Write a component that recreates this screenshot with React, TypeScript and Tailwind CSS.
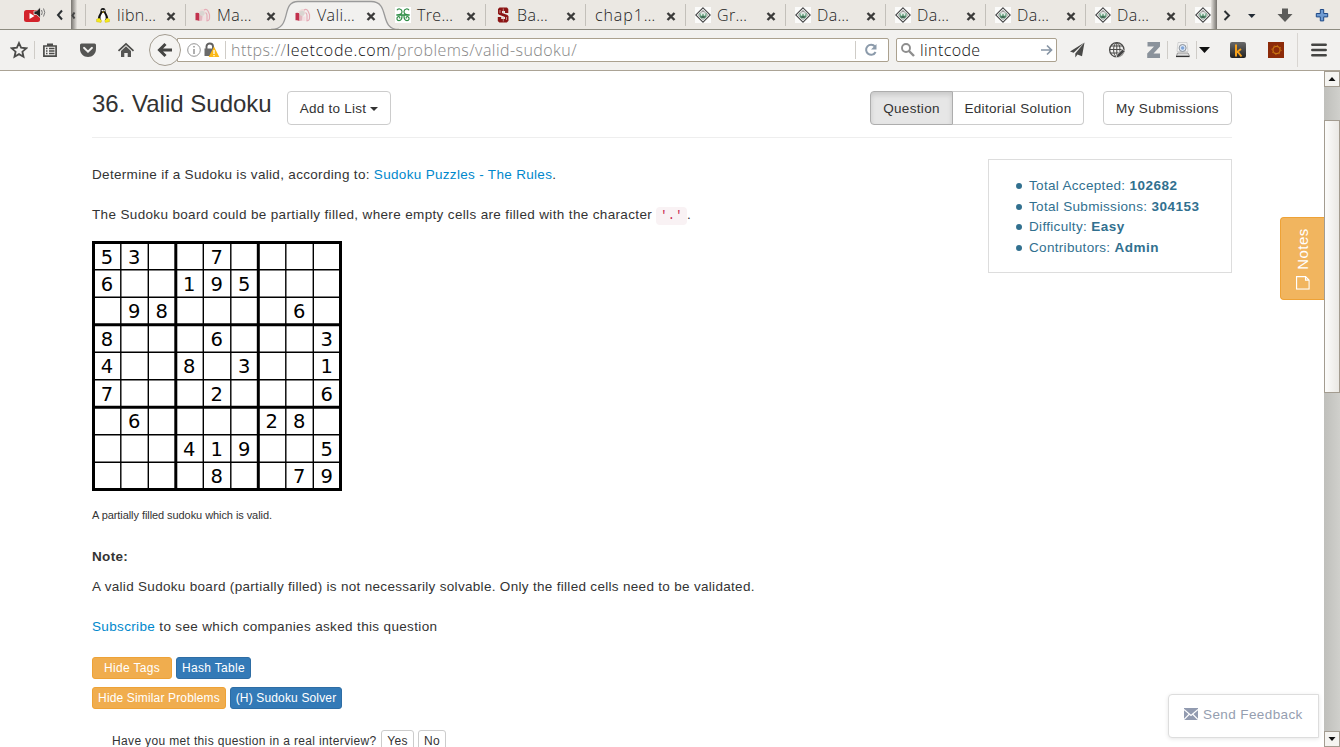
import React from "react";

type P = { children?: React.ReactNode; className?: string };

const TabClose = () => (
  <svg width="10" height="9" viewBox="0 0 10 9" className="shrink-0">
    <path d="M1.500 1L8.500 8M8.500 1L1.500 8" stroke="#3b3b3a" strokeWidth="2.400" fill="none" />
  </svg>
);

const Tux = () => (
  <svg width="16" height="16" viewBox="0 0 16 16">
    <path d="M8 1C6.200 1 5.400 2 5.500 4.300c.1 1.700-2 3.500-2.500 6.200L3.200 13h9.600l.3-2.500C12.700 8 10.600 6 10.500 4.300 10.500 2 9.800 1 8 1z" fill="#111" />
    <path d="M7.300 6C6.300 7.500 5.300 9 5.500 11.500c.2 2.500 5 2.500 5.200 0C10.900 9 10 7.500 9 6z" fill="#fff" />
    <path d="M1.500 12.300l2.700-1.300 2.500 2.700-.7 1.800-4.500-.7zM14.500 12.300L12 11l-2.300 2.700.7 1.800 4.100-.8z" fill="#f5ea1a" stroke="#b09800" strokeWidth=".3" />
    <circle cx="7.300" cy="3.600" r=".8" fill="#fff" />
    <circle cx="9.100" cy="3.600" r=".8" fill="#fff" />
    <path d="M7 4.700h2.400L8.200 5.900z" fill="#f5c20a" />
  </svg>
);

const Red = () => (
  <svg width="16" height="16" viewBox="0 0 16 16">
    <path d="M.5 6q2-.8 4 .2V14Q2.500 12.800.5 13.300z" fill="#c2314d" />
    <path d="M3 4.500l4-2.500 3 .5v3.500l-2 3.500-3.500-3z" fill="#efdcda" />
    <path d="M4.500 7l3 2v4.500L4.500 14z" fill="#e3b6be" />
    <circle cx="7" cy="6.300" r="2.500" fill="#d9d5d1" />
    <path d="M8 9.500h2.500v4.500H7" fill="#f3dfe1" />
    <path d="M9 3q2.500-1.500 4 1l1.500 3.500v4q-.5 2.500-3 2.500M10.500 5.500q1.500 1 1.500 3v5.500" stroke="#e5acb7" strokeWidth="1.200" fill="none" />
  </svg>
);

const Geeks = () => (
  <svg width="16" height="16" viewBox="0 0 16 16">
    <rect width="16" height="16" fill="#fff" />
    <path d="M2 3.200c1-2 4.800-1.700 5 1.300.1 2.200-1.400 3.400-5 3.500h12c-3.600-.1-5.100-1.300-5-3.500.2-3 4-3.300 5-1.300" fill="none" stroke="#2f8d46" strokeWidth="1.200" />
    <path d="M1 8h14M7 8c.2 3.800-1 5.700-3 5.700-2.300 0-2.800-2.900-1-4 1.200-.5 2.200.5 1.600 1.700M9 8c-.2 3.800 1 5.700 3 5.700 2.300 0 2.800-2.900 1-4-1.200-.5-2.200.5-1.600 1.700" fill="none" stroke="#2f8d46" strokeWidth="1.200" />
  </svg>
);

const Stanford = () => (
  <svg width="16" height="16" viewBox="0 0 16 16">
    <path d="M4.500 .5h7.500l1.300 1.500v4h-3.300V4H7v2l5.500 2 1 1.200v4.600L11.800 15.500H4.300L2.800 14v-4h3.400v2H10v-2L4 7.800l-1-1V2z" fill="#8c1515" />
    <path d="M8.300 1.500v4.500M8.300 9.500v5M5 3v3M11.500 10v3" stroke="#d9b9b5" strokeWidth=".7" />
  </svg>
);

const Diamond = () => (
  <svg width="16" height="16" viewBox="0 0 16 16">
    <rect width="16" height="16" fill="#fbfbfa" />
    <path d="M8 .8L15.200 8 8 15.200.8 8z" fill="#fff" stroke="#484848" strokeWidth="1.100" />
    <path d="M8 3L13 8l-5 5-5-5z" fill="none" stroke="#a2a2a2" strokeWidth=".7" />
    <path d="M4.500 6l1.500.7h4l1.500-.7c.6 3.500-.8 5.500-3.500 5.500S3.900 9.500 4.500 6z" fill="#529070" />
    <circle cx="6.500" cy="7.700" r="1" fill="#e5f2e9" />
    <circle cx="9.500" cy="7.700" r="1" fill="#e5f2e9" />
    <path d="M6.800 5.500L8 4.300l1.200 1.200M6.500 10h3" stroke="#333" strokeWidth=".8" fill="none" />
  </svg>
);

const Tab = ({ icon, label, first }: { icon?: React.ReactNode; label: string; first?: boolean }) => (
  <div className="flex h-[30px] w-[100px] shrink-0 items-center">
    <div className={first ? "h-[22px] w-px" : "h-[22px] w-px bg-[#c3c0ba]"} />
    {icon && <div className="ml-[9px] h-4 w-4">{icon}</div>}
    <div className={icon ? "ml-[6px] w-[46px] text-[16px] leading-[30px] tracking-[0.350px] whitespace-nowrap" : "ml-[9px] w-[68px] text-[16px] leading-[30px] tracking-[0.900px] whitespace-nowrap"}>{label}</div>
    <div className="mt-[2px] ml-[3px]"><TabClose /></div>
  </div>
);

const TabStrip = () => (
  <div className="relative flex h-[30px] w-full overflow-hidden border-b border-[#8d8b80] bg-[#ebe8e3] font-['Open_Sans','Noto_Sans',sans-serif] font-light text-[#1c1c1c]">
    <div className="flex w-[71px] shrink-0 items-center">
      <svg width="22" height="16" viewBox="0 0 22 16" className="ml-[24px]">
        <rect x="0" y="3" width="16" height="12" rx="2.500" fill="#d3232b" />
        <path d="M5.500 6v6l5-3z" fill="#fff" />
        <path d="M10 4h2.500l4-4v11l-4-3.500H10z" fill="#222" stroke="#f3f0ec" strokeWidth=".8" />
        <path d="M17.500 3q1.500 2.500 0 5M19.500 1.500q2.500 4 0 8" stroke="#777" fill="none" />
      </svg>
      <svg width="8" height="12" viewBox="0 0 8 12" className="ml-[10px]">
        <path d="M6 1.500L2 6l4 4.500" stroke="#2b3033" strokeWidth="2" fill="none" />
      </svg>
    </div>
    <div className="flex w-[14px] shrink-0 items-center bg-linear-to-r from-[#77746f] to-[#ebe8e3] to-45%">
      <svg width="6" height="9" viewBox="0 0 6 9" className="mt-[2px]"><path d="M3.500 1.500L1.500 4.500l2 3" stroke="#444" strokeWidth="2" fill="none" /></svg>
    </div>
    <Tab icon={<Tux />} label="libn…" />
    <Tab icon={<Red />} label="Ma…" />
    <div className="relative w-[100px] shrink-0">
      <svg width="128" height="30" viewBox="0 0 128 30" className="absolute top-0 -left-[14px]">
        <path d="M0 30V29.500C22 29.500 9 1.500 27 1.500H100C120 1.500 107 29.500 128 29.500V30z" fill="#f2f1ef" />
        <path d="M0 29.500C22 29.500 9 1.500 27 1.500H100C120 1.500 107 29.500 128 29.500" fill="none" stroke="#9a9a9a" strokeWidth="1.300" />
      </svg>
      <div className="relative"><Tab icon={<Red />} label="Vali…" first /></div>
    </div>
    <Tab icon={<Geeks />} label="Tre…" first />
    <Tab icon={<Stanford />} label="Ba…" />
    <Tab label="chap1…" />
    <Tab icon={<Diamond />} label="Gr…" />
    <Tab icon={<Diamond />} label="Da…" />
    <Tab icon={<Diamond />} label="Da…" />
    <Tab icon={<Diamond />} label="Da…" />
    <Tab icon={<Diamond />} label="Da…" />
    <div className="flex w-[32px] shrink-0 items-center bg-linear-to-r from-[#ebe8e3] from-80% to-[#77746f]">
      <div className="h-[22px] w-px bg-[#c3c0ba]" />
      <div className="ml-[9px] h-4 w-4"><Diamond /></div>
    </div>
    <div className="flex flex-1 items-center">
      <svg width="123" height="30" viewBox="1217 0 123 30">
        <path d="M1224.500 11L1229 15.500l-4.500 4.500" stroke="#2b3033" strokeWidth="2" fill="none" />
        <path d="M1248 14h7.500l-3.750 4z" fill="#222b35" />
        <path d="M1282 8.500h6v5.500h4.500L1285 22l-7.500-8h4.500z" fill="#5c5c5a" />
        <path d="M1320.300 9.500h3.400v4h4v3.400h-4v4h-3.400v-4h-4v-3.400h4z" fill="#6f9bd2" stroke="#204a87" strokeWidth="1" />
      </svg>
    </div>
  </div>
);

const Icon = ({ children, className }: P) => (
  <svg width="18" height="18" viewBox="0 0 18 18" className={`shrink-0 ${className ?? ""}`} fill="none">{children}</svg>
);

const Sep = ({ className }: P) => <div className={`h-[18px] w-px shrink-0 bg-[#cfccc7] ${className ?? ""}`} />;

const NavBar = () => (
  <div className="flex h-[41px] w-full items-center border-b border-[#aba395] bg-[#f2f1ef] font-['Open_Sans','Noto_Sans',sans-serif]">
    <Icon className="ml-[10px]"><path d="M9 2l2.100 4.700 5.100.6-3.800 3.400 1.100 5L9 13.100l-4.500 2.600 1.100-5L1.800 7.300l5.100-.6z" stroke="#4c4c4a" strokeWidth="1.800" /></Icon>
    <Sep className="ml-[6px]" />
    <Icon className="ml-[6px]">
      <path d="M2.900 5h12.200v10.100H2.900z" stroke="#4c4c4a" strokeWidth="1.700" />
      <path d="M6 5V2.500h6V5" fill="#4c4c4a" />
      <path d="M5 7.500h1.500M8 7.500h5.500M5 10h1.500M8 10h5.500M5 12.500h1.500M8 12.500h5.500" stroke="#4c4c4a" strokeWidth="1.400" />
    </Icon>
    <Icon className="ml-[20px]">
      <path d="M2.500 2.500h13q1.500 0 1.500 1.500v4c0 4.500-3.500 8-8 8s-8-3.500-8-8V4q0-1.500 1.500-1.500z" fill="#565654" />
      <path d="M5 6.800l4 3.800 4-3.800" stroke="#f2f1ef" strokeWidth="1.900" strokeLinecap="round" />
    </Icon>
    <Icon className="ml-[20px]">
      <path d="M1.500 9.800L9 2.800l7.500 7" stroke="#4c4c4a" strokeWidth="1.700" />
      <path d="M4 10l5-4.700 5 4.700v6h-3.300v-4H7.300v4H4z" fill="#555553" />
    </Icon>
    <div className="z-10 ml-[14px] flex h-8 w-8 shrink-0 items-center justify-center rounded-full border border-[#a39c90] bg-[#f4f3f1]">
      <Icon><path d="M9.500 3L3.500 9l6 6M4 9h12" stroke="#454543" strokeWidth="3" /></Icon>
    </div>
    <div className="-ml-[4px] flex h-6 w-[712px] shrink-0 items-center rounded-r-[2px] border border-[#aba18f] bg-white">
      <Icon className="ml-[7px]">
        <circle cx="9" cy="9" r="6.300" stroke="#959595" strokeWidth="1" />
        <path d="M9 8v5M9 5v1.500" stroke="#959595" strokeWidth="1.500" />
      </Icon>
      <Icon>
        <path d="M3.500 8V5.500c0-4 6.500-4 6.500 0V8" stroke="#606060" strokeWidth="1.900" />
        <path d="M1.500 7.500h10.500V15H1.500z" fill="#6b6b6b" />
        <path d="M11 5.500l5.300 10.500H5.700z" fill="#fbb917" />
        <path d="M11 9v4M11 14v1.200" stroke="#fff" strokeWidth="1.300" />
      </Icon>
      <Sep className="ml-[4px]" />
      <span className="ml-[5px] w-[624px] text-[16px] leading-[22px] font-light tracking-[0.450px] text-[#858585]">https://<span className="tracking-[0.650px] text-[#111]">leetcode.com</span>/problems/valid-sudoku/</span>
      <Sep />
      <Icon className="ml-[6px]">
        <path d="M13 5.600A5 5 0 1 0 13.600 11" stroke="#8c9bab" strokeWidth="2" />
        <path d="M14.500 3v5.500H9z" fill="#8c9bab" />
      </Icon>
    </div>
    <div className="ml-[7px] flex h-6 w-[161px] shrink-0 items-center rounded-[2px] border border-[#aba18f] bg-white">
      <Icon className="ml-[2px]"><circle cx="7" cy="7" r="4" stroke="#8e8e8e" strokeWidth="1.900" /><path d="M10 10l5 5" stroke="#8e8e8e" strokeWidth="2.400" /></Icon>
      <span className="ml-[3px] w-[121px] text-[16px] leading-[22px] font-light tracking-[0.400px] text-[#111]">lintcode</span>
      <Icon><path d="M3 9h10M9 4.500L13.500 9 9 13.500" stroke="#8795a5" strokeWidth="1.700" /></Icon>
    </div>
    <Icon className="ml-[12px]"><path d="M15.500 1.500L1 10.500l3.600 1.200zM15.500 1.500L6.300 12.400v4.100l2.200-3 4.500 1.700z" fill="#4a4a48" /></Icon>
    <Icon className="ml-[21px]">
      <circle cx="8.800" cy="8.800" r="7.200" stroke="#4a4a48" strokeWidth="1.300" />
      <ellipse cx="8.800" cy="8.800" rx="3.200" ry="7" stroke="#4a4a48" />
      <path d="M1.800 8.500h14M3 5h11.500M3 12h11M8.800 2v13" stroke="#4a4a48" />
      <path d="M8 17l1-3.500 5.500-5.500 2.500 2.500-5.500 5.500z" fill="#444" stroke="#f2f1ef" strokeWidth=".8" />
    </Icon>
    <Icon className="ml-[19px]"><path d="M2.500 1h12.500v4.500L8.500 12.500H15V17H2.200v-4.500l6.800-7H2.500z" fill="#8a929b" /></Icon>
    <Sep className="ml-[4px]" />
    <Icon className="ml-[6px]">
      <path d="M4 1.500h9l1 9H3z" fill="#f2f2f2" stroke="#c5c5c5" strokeWidth=".7" />
      <circle cx="8.600" cy="7" r="3.500" fill="#dce6f3" stroke="#80878f" strokeWidth=".9" />
      <circle cx="8.600" cy="7" r="1.700" fill="#7fa5da" />
      <path d="M3.500 12h10.500l1.500 3h-13z" fill="#dcdcdc" stroke="#888" strokeWidth=".8" />
      <path d="M2 15.500h13.500" stroke="#333" strokeWidth="1.200" />
    </Icon>
    <Sep className="ml-[4px]" />
    <svg width="12" height="8" viewBox="0 0 12 8" className="ml-[2px] shrink-0"><path d="M0 1h11L5.500 7z" fill="#111" /></svg>
    <svg width="16" height="16" viewBox="0 0 16 16" className="ml-[19px] shrink-0">
      <defs><linearGradient id="kbg" x1="0" y1="0" x2="0" y2="1"><stop offset="0" stopColor="#6a6a6a" /><stop offset="1" stopColor="#222" /></linearGradient></defs>
      <rect width="16" height="16" rx="2" fill="url(#kbg)" />
      <path d="M6 2.500v12M11 7l-4.500 3.500M8 10l3.500 4.500" stroke="#f5a11c" strokeWidth="2" fill="none" />
    </svg>
    <svg width="16" height="16" viewBox="0 0 16 16" className="ml-[22px] shrink-0">
      <rect width="16" height="16" fill="#8c2a08" />
      <circle cx="8.500" cy="8" r="3.600" fill="none" stroke="#c9740f" strokeWidth="1.200" />
      <circle cx="8.500" cy="8" r="4.700" fill="none" stroke="#c9740f" strokeWidth="1" strokeDasharray="1 2.690" />
    </svg>
    <div className="ml-[13px] h-[34px] w-px bg-[#d9d6d2]" />
    <svg width="16" height="14" viewBox="0 0 16 14" className="ml-[13px] shrink-0"><path d="M1.300 1.800h13.400M1.300 7h13.400M1.300 12.200h13.400" stroke="#454543" strokeWidth="2.500" strokeLinecap="round" /></svg>
  </div>
);

const ROWS = ["53..7....", "6..195...", ".98....6.", "8...6...3", "4..8.3..1", "7...2...6", ".6....28.", "...419..5", "....8..79"];

const Sudoku = () => (
  <svg width="250" height="250" viewBox="0 0 250 250" className="block">
    <rect x="1.500" y="1.500" width="247" height="247" fill="#fff" stroke="#000" strokeWidth="3" />
    {[1, 2, 3, 4, 5, 6, 7, 8].map((i) => {
      const p = 1.300 + i * 27.500;
      const w = i % 3 === 0 ? 3 : 1.400;
      return (
        <g key={i} stroke="#000" strokeWidth={w}>
          <path d={`M${p} 0V250`} />
          <path d={`M0 ${p}H250`} />
        </g>
      );
    })}
    <g fontFamily="DejaVu Sans" fontSize="19.500" textAnchor="middle" fill="#000">
      {ROWS.map((r, y) =>
        r.split("").map((c, x) => (c === "." ? null : (
          <text key={`${x}-${y}`} x={15 + x * 27.470} y={22.500 + y * 27.470}>{c}</text>
        )))
      )}
    </g>
  </svg>
);

const Stat = ({ label, value }: { label: string; value: string }) => (
  <li className="flex h-[20.600px] items-center">
    <span className="mr-[7px] h-[6px] w-[6px] rounded-full bg-[#31708f]" />
    <span className="whitespace-pre">{label} </span><b className="tracking-[0.500px]">{value}</b>
  </li>
);

const Problem = () => (
  <main className="w-[1140px] text-[13.500px] tracking-[0.320px] text-[#333]">
    <div className="flex h-[67px] items-start border-b border-[#eee] pt-[20px]">
      <h1 className="w-[195px] text-[24px] leading-[26px] tracking-normal whitespace-nowrap">36. Valid Sudoku</h1>
      <button className="flex h-[34px] w-[104px] items-center justify-center rounded-[4px] border border-[#ccc] pt-[2px] tracking-[0.250px]">Add to List<svg width="8" height="4" viewBox="0 0 8 4" className="ml-[4px]"><path d="M0 0h8L4 4z" fill="#333" /></svg></button>
      <div className="ml-auto flex">
        <button className="h-[34px] w-[83px] rounded-l-[4px] border border-[#adadad] bg-[#e6e6e6] pt-[2px] shadow-[inset_0_3px_5px_rgba(0,0,0,0.125)]">Question</button>
        <button className="h-[34px] w-[131px] rounded-r-[4px] border border-l-0 border-[#ccc] pt-[2px]">Editorial Solution</button>
        <button className="ml-[19px] h-[34px] w-[129px] rounded-[4px] border border-[#ccc] pt-[2px]">My Submissions</button>
      </div>
    </div>
    <div className="flex justify-between">
      <div className="pt-[27px] leading-5 whitespace-nowrap">
        <p>Determine if a Sudoku is valid, according to: <a className="text-[#0088cc]">Sudoku Puzzles - The Rules</a>.</p>
        <p className="mt-5 h-5 tracking-[0.350px]">The Sudoku board could be partially filled, where empty cells are filled with the character <code className="rounded-[4px] bg-[#f9f2f4] px-1 py-[2px] font-['Liberation_Mono',monospace] text-[12px] text-[#c7254e]">'.'</code>.</p>
        <div className="mt-4"><Sudoku /></div>
        <p className="mt-[14px] text-[11px] tracking-[-0.070px]">A partially filled sudoku which is valid.</p>
        <p className="mt-[22px] font-bold">Note:</p>
        <p className="mt-[10px] tracking-[0.310px]">A valid Sudoku board (partially filled) is not necessarily solvable. Only the filled cells need to be validated.</p>
        <p className="mt-5 tracking-[0.350px]"><a className="text-[#0088cc]">Subscribe</a> to see which companies asked this question</p>
        <div className="mt-5 flex gap-1 text-[12px] leading-5 text-white">
          <span className="w-[80px] rounded-[3px] border border-[#eea236] bg-[#f0ad4e] text-center">Hide Tags</span>
          <span className="w-[75px] rounded-[3px] border border-[#2e6da4] bg-[#337ab7] text-center">Hash Table</span>
        </div>
        <div className="mt-2 flex gap-1 text-[12px] leading-5 tracking-[0.150px] text-white">
          <span className="w-[134px] rounded-[3px] border border-[#eea236] bg-[#f0ad4e] text-center">Hide Similar Problems</span>
          <span className="w-[112px] rounded-[3px] border border-[#2e6da4] bg-[#337ab7] text-center">(H) Sudoku Solver</span>
        </div>
        <div className="mt-[21px] flex pl-[20px] text-[12px] leading-5">
          <span className="w-[269px] pt-px tracking-[0.350px]">Have you met this question in a real interview?</span>
          <span className="w-[33px] rounded-[3px] border border-[#ccc] text-center">Yes</span>
          <span className="ml-1 w-[28px] rounded-[3px] border border-[#ccc] text-center">No</span>
        </div>
      </div>
      <ul className="mt-[21px] h-[114px] w-[244px] border border-[#ddd] pt-[16px] pl-[27px] text-[#31708f]">
        <Stat label="Total Accepted:" value="102682" />
        <Stat label="Total Submissions:" value="304153" />
        <Stat label="Difficulty:" value="Easy" />
        <Stat label="Contributors:" value="Admin" />
      </ul>
    </div>
  </main>
);

const ScrollButton = ({ up }: { up?: boolean }) => (
  <div className="flex h-4 w-4 shrink-0 items-center justify-center border border-[#a39c90] bg-[#f5f4f1]">
    <svg width="8" height="4" viewBox="0 0 8 4"><path d={up ? "M.5 4L4 0l3.500 4z" : "M.5 0h7L4 4z"} fill="#111" /></svg>
  </div>
);

const ScrollBar = () => (
  <div className="flex h-full w-4 shrink-0 flex-col bg-linear-to-r from-[#bfbfbb] to-[#d0d0cc]">
    <ScrollButton up />
    <div className="mt-[33px] h-[273px] w-4 border border-[#a39c90] bg-linear-to-r from-[#fcfcfb] to-[#eae8e4]" />
    <div className="mt-auto"><ScrollButton /></div>
  </div>
);

export default function App() {
  return (
    <div className="flex h-[747px] w-[1340px] flex-col overflow-hidden bg-white font-['Liberation_Sans',Arial,sans-serif]">
      <TabStrip />
      <NavBar />
      <div className="relative flex h-[676px] justify-between overflow-hidden pl-[92px]">
        <Problem />
        <ScrollBar />
        <div className="absolute top-[146px] right-4 flex h-[83px] w-[44px] items-center justify-center rounded-l-[4px] border border-r-0 border-[#eea236] bg-[#f0ad4e]/90 text-white">
          <div className="flex -rotate-90 items-center gap-[6px] text-[15px] leading-5 tracking-[0.500px]">
            <svg width="14" height="14" viewBox="0 0 14 14" fill="none" stroke="#fff" strokeWidth="1.200" className="shrink-0"><path d="M.7.7h9.600L13.300 0V13.300H.7zM9.700 13.300V9.700h3.600" stroke="none" /><path d="M.7.7h12.600v9L9.700 13.300H.7zM9.700 13.300V9.700h3.600" /></svg>
            Notes
          </div>
        </div>
        <div className="absolute top-[623px] left-[1168px] flex h-[44px] w-[151px] items-center rounded-l-[4px] border border-[#ddd] bg-white pb-[3px] pl-[15px] text-[13.500px] tracking-[0.400px] text-[#959eb0] shadow-[0_1px_4px_rgba(0,0,0,0.1)]">
          <svg width="14" height="12" viewBox="0 0 14 12" className="-mt-px"><path d="M0 0h14v12H0z" fill="#929bb0" /><path d="M0 1.500l7 6 7-6M0 11.500l5-5M14 11.500l-5-5" stroke="#fff" strokeWidth="1.200" fill="none" /></svg>
          <span className="ml-[5px] pt-[2px] whitespace-nowrap">Send Feedback</span>
        </div>
      </div>
    </div>
  );
}
